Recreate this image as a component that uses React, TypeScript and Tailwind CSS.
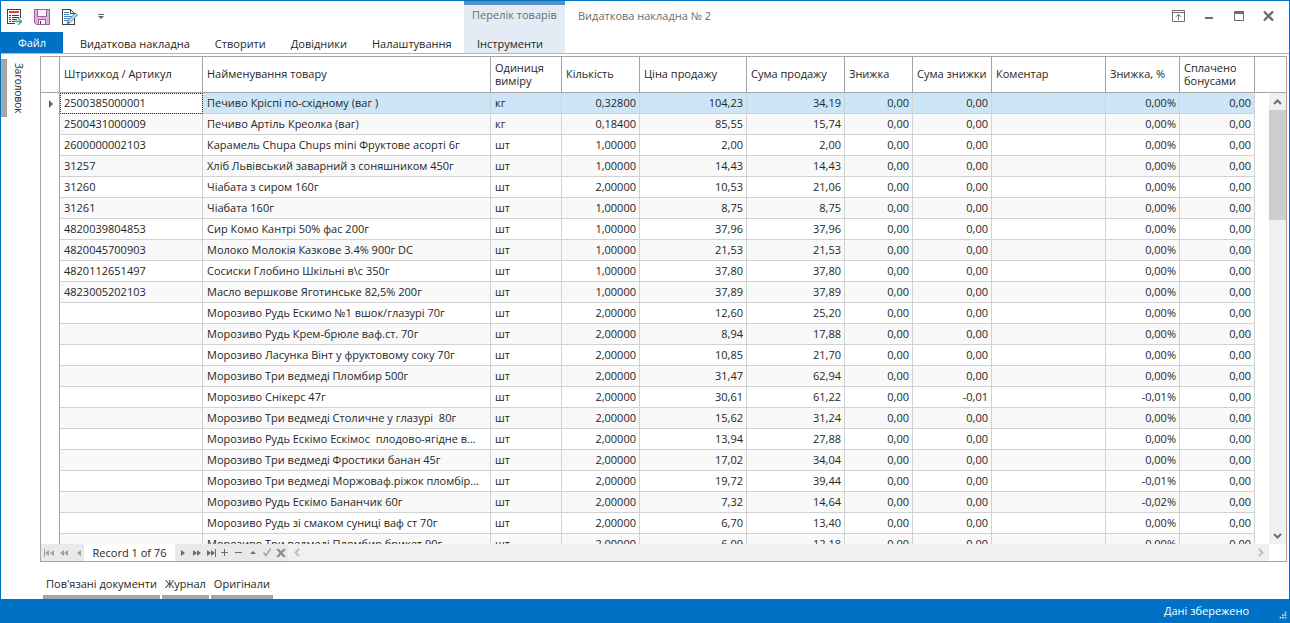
import type { ReactNode } from 'react';
import clsx from 'clsx';

type Row = {
    code: string;
    name: string;
    unit: string;
    qty: string;
    price: string;
    sum: string;
    discountSum?: string;
    discountPct?: string;
};

const rows: Row[] = [
    { code: '2500385000001', name: 'Печиво Кріспі по-східному (ваг )', unit: 'кг', qty: '0,32800', price: '104,23', sum: '34,19' },
    { code: '2500431000009', name: 'Печиво Артіль Креолка (ваг)', unit: 'кг', qty: '0,18400', price: '85,55', sum: '15,74' },
    { code: '2600000002103', name: 'Карамель Chupa Chups mini Фруктове асорті 6г', unit: 'шт', qty: '1,00000', price: '2,00', sum: '2,00' },
    { code: '31257', name: 'Хліб Львівський заварний з соняшником 450г', unit: 'шт', qty: '1,00000', price: '14,43', sum: '14,43' },
    { code: '31260', name: 'Чіабата з сиром 160г', unit: 'шт', qty: '2,00000', price: '10,53', sum: '21,06' },
    { code: '31261', name: 'Чіабата 160г', unit: 'шт', qty: '1,00000', price: '8,75', sum: '8,75' },
    { code: '4820039804853', name: 'Сир Комо Кантрі 50% фас 200г', unit: 'шт', qty: '1,00000', price: '37,96', sum: '37,96' },
    { code: '4820045700903', name: 'Молоко Молокія Казкове 3.4% 900г DC', unit: 'шт', qty: '1,00000', price: '21,53', sum: '21,53' },
    { code: '4820112651497', name: 'Сосиски Глобино Шкільні в\\с 350г', unit: 'шт', qty: '1,00000', price: '37,80', sum: '37,80' },
    { code: '4823005202103', name: 'Масло вершкове Яготинське 82,5% 200г', unit: 'шт', qty: '1,00000', price: '37,89', sum: '37,89' },
    { code: '', name: 'Морозиво Рудь Ескимо №1 вшок/глазурі 70г', unit: 'шт', qty: '2,00000', price: '12,60', sum: '25,20' },
    { code: '', name: 'Морозиво Рудь Крем-брюле ваф.ст. 70г', unit: 'шт', qty: '2,00000', price: '8,94', sum: '17,88' },
    { code: '', name: 'Морозиво Ласунка Вінт у фруктовому соку 70г', unit: 'шт', qty: '2,00000', price: '10,85', sum: '21,70' },
    { code: '', name: 'Морозиво Три ведмеді Пломбир 500г', unit: 'шт', qty: '2,00000', price: '31,47', sum: '62,94' },
    { code: '', name: 'Морозиво Снікерс 47г', unit: 'шт', qty: '2,00000', price: '30,61', sum: '61,22', discountSum: '-0,01', discountPct: '-0,01%' },
    { code: '', name: 'Морозиво Три ведмеді Столичне у глазурі  80г', unit: 'шт', qty: '2,00000', price: '15,62', sum: '31,24' },
    { code: '', name: 'Морозиво Рудь Ескімо Ескімос  плодово-ягідне в...', unit: 'шт', qty: '2,00000', price: '13,94', sum: '27,88' },
    { code: '', name: 'Морозиво Три ведмеді Фростики банан 45г', unit: 'шт', qty: '2,00000', price: '17,02', sum: '34,04' },
    { code: '', name: 'Морозиво Три ведмеді Моржоваф.ріжок пломбір...', unit: 'шт', qty: '2,00000', price: '19,72', sum: '39,44', discountPct: '-0,01%' },
    { code: '', name: 'Морозиво Рудь Ескімо Бананчик 60г', unit: 'шт', qty: '2,00000', price: '7,32', sum: '14,64', discountPct: '-0,02%' },
    { code: '', name: 'Морозиво Рудь зі смаком суниці ваф ст 70г', unit: 'шт', qty: '2,00000', price: '6,70', sum: '13,40' },
    { code: '', name: 'Морозиво Три ведмеді Пломбир брикет 90г', unit: 'шт', qty: '2,00000', price: '6,09', sum: '12,18' },
];

const columns = [
    { title: 'Штрихкод / Артикул', width: 'w-[143px]' },
    { title: 'Найменування товару', width: '' },
    { title: 'Одиниця виміру', width: 'w-[71px]' },
    { title: 'Кількість', width: 'w-[78px]' },
    { title: 'Ціна продажу', width: 'w-[107px]' },
    { title: 'Сума продажу', width: 'w-[98px]' },
    { title: 'Знижка', width: 'w-[68px]' },
    { title: 'Сума знижки', width: 'w-[79px]' },
    { title: 'Коментар', width: 'w-[114px]' },
    { title: 'Знижка, %', width: 'w-[74px]' },
    { title: 'Сплачено бонусами', width: 'w-[75px]' },
];

const ribbonTabs = ['Видаткова накладна', 'Створити', 'Довідники', 'Налаштування'];

function QuickAccess() {
    return (
        <div className="flex h-8 items-center pl-1.5">
            <button aria-label="Перейти до документа" className="mr-3">
                <svg width="15" height="16" viewBox="0 0 15 16" shapeRendering="crispEdges">
                    <path d="M8 14.5H.5V.5h13V9" fill="none" stroke="#404040" />
                    <path d="M2 2h10v2H2z" fill="#e8433a" />
                    <path d="M2 6h2v1H2zM5 6h7v1H5zM2 8h2v1H2zM5 8h7v1H5zM2 10h2v1H2zM5 10h5v1H5zM2 12h2v1H2zM5 12h2v1H5z" fill="#404040" />
                    <path d="M7 12.5h8M11 9l3.500 3.500L11 16" fill="none" stroke="#4aa37c" shapeRendering="auto" strokeWidth="1.3" />
                </svg>
            </button>
            <button aria-label="Зберегти" className="mr-3">
                <svg width="16" height="16" viewBox="0 0 16 16" shapeRendering="crispEdges">
                    <path d="M.5.5h15v15h-13l-2-2z" fill="#dcb4dc" stroke="#a35ca5" />
                    <path d="M3.500.5h9v7h-9z" fill="#fbf5fb" stroke="#a35ca5" />
                    <path d="M4.500 10.500h7v5h-7z" fill="#fff" stroke="#a35ca5" />
                    <path d="M6 12h1v3H6z" fill="#404040" />
                </svg>
            </button>
            <button aria-label="Редагувати" className="mr-5">
                <svg width="16" height="16" viewBox="0 0 16 16">
                    <path d="M.5.5h8l4 4v11H.5z" fill="#fff" stroke="#404040" shapeRendering="crispEdges" />
                    <path d="M8.500.5v4h4" fill="none" stroke="#404040" />
                    <path d="M2 3.500h5M2 5.500h5M2 7.500h8M2 9.500h6M2 11.500h4" stroke="#4b86b4" shapeRendering="crispEdges" />
                    <path d="M5.500 14.500l1-3.500 7-7 2 2-7 7z" fill="#b9dcf3" stroke="#3f87bd" />
                    <path d="M4.500 15.500l1.500-3.500 2 2z" fill="#3f87bd" />
                </svg>
            </button>
            <button aria-label="Налаштувати панель">
                <svg width="6" height="6" viewBox="0 0 6 6" fill="#666">
                    <path d="M0 0h6v1H0zM0 2h6L3 5z" />
                </svg>
            </button>
        </div>
    );
}

function WindowControls() {
    return (
        <div className="flex gap-4 pr-[13px] text-[#6d6d6d]">
            <button aria-label="Сховати стрічку">
                <svg width="14" height="14" viewBox="0 0 14 14" fill="none" stroke="currentColor">
                    <path d="M.5 1.500h12v11H.5zM1 3.500h11M6.500 11V5.500M4 7.800l2.500-2.500L9 7.800" />
                </svg>
            </button>
            <button aria-label="Згорнути">
                <svg width="14" height="14" viewBox="0 0 14 14" fill="currentColor">
                    <path d="M3 8h8v2H3z" />
                </svg>
            </button>
            <button aria-label="Розгорнути">
                <svg width="14" height="14" viewBox="0 0 14 14" fill="currentColor">
                    <path fillRule="evenodd" d="M2 2h10v10H2zM3 5v6h8V5z" />
                </svg>
            </button>
            <button aria-label="Закрити">
                <svg width="14" height="14" viewBox="0 0 14 14" fill="none" stroke="currentColor" strokeWidth="2.400">
                    <path d="M2 2.500l9 9M11 2.500l-9 9" />
                </svg>
            </button>
        </div>
    );
}

function Ribbon() {
    return (
        <header className="flex h-[53px] shrink-0 border-b border-[#b4b4b4]">
            <div className="flex w-[463px] shrink-0 flex-col">
                <QuickAccess />
                <nav className="flex h-5 items-stretch gap-px">
                    <button className="mr-1 -mt-px w-[62px] bg-[#0072c6] text-white">Файл</button>
                    {ribbonTabs.map((tab) => (
                        <button key={tab} className="px-3 whitespace-nowrap">{tab}</button>
                    ))}
                </nav>
            </div>
            <div className="flex w-[101px] shrink-0 flex-col border-t-4 border-[#5b8fbf] bg-[#e3ecf5]">
                <span className="pt-0.5 text-center whitespace-nowrap text-[#6d6d6d]">Перелік товарів</span>
                <button className="mt-auto px-[13px] pb-0.5 text-left">Інструменти</button>
            </div>
            <div className="flex h-[30px] flex-1 items-center justify-between pl-[13px]">
                <h1 className="pb-0.5 text-[#6d6d6d]">Видаткова накладна № 2</h1>
                <WindowControls />
            </div>
        </header>
    );
}

function Cell({ children, right, className }: { children?: ReactNode; right?: boolean; className?: string }) {
    return (
        <td
            className={clsx(
                'overflow-hidden border-r border-b border-[#d2d2d2] p-0 pb-0.5 whitespace-pre',
                right ? 'pr-[3px] text-right' : 'pl-1',
                className
            )}
        >
            {children}
        </td>
    );
}

function ItemsTable() {
    return (
        <table className="w-full min-w-0 table-fixed border-separate border-spacing-0">
            <colgroup>
                <col className="w-[19px]" />
                {columns.map((c) => (
                    <col key={c.title} className={c.width} />
                ))}
                <col className="w-[14px]" />
            </colgroup>
            <thead>
                <tr className="h-9">
                    <th className="border-r border-b border-[#a5a5a5] p-0" />
                    {columns.map((c) => (
                        <th key={c.title} className="border-r border-b border-[#a5a5a5] p-0 pb-0.5 pl-1 text-left leading-[13px] font-normal">
                            {c.title}
                        </th>
                    ))}
                    <th className="border-b border-[#a5a5a5] p-0" />
                </tr>
            </thead>
            <tbody>
                {rows.map((r, i) => (
                    <tr key={i} className={clsx('h-[21px]', i === 0 ? 'bg-[#cde6f7]' : i % 2 === 1 && 'bg-[#f9f9f9]')}>
                        <td className="border-r border-[#a5a5a5] bg-white p-0">
                            {i === 0 && (
                                <svg className="ml-2" width="4" height="8" viewBox="0 0 4 8" fill="#666">
                                    <path d="M0 0l4 4-4 4z" />
                                </svg>
                            )}
                        </td>
                        <Cell className={i === 0 ? 'bg-white outline-1 -outline-offset-1 outline-dotted outline-[#333]' : ''}>{r.code}</Cell>
                        <Cell>{r.name}</Cell>
                        <Cell>{r.unit}</Cell>
                        <Cell right>{r.qty}</Cell>
                        <Cell right>{r.price}</Cell>
                        <Cell right>{r.sum}</Cell>
                        <Cell right>0,00</Cell>
                        <Cell right>{r.discountSum ?? '0,00'}</Cell>
                        <Cell />
                        <Cell right>{r.discountPct ?? '0,00%'}</Cell>
                        <Cell right>0,00</Cell>
                        <td className="bg-white p-0" />
                    </tr>
                ))}
            </tbody>
        </table>
    );
}

function Scrollbar() {
    return (
        <div className="flex w-[17px] shrink-0 flex-col">
            <div className="h-9 shrink-0 border-b border-[#a5a5a5]" />
            <div className="flex flex-1 flex-col bg-[#f0f0f0]">
                <button aria-label="Вгору" className="flex h-[17px] items-center justify-center">
                    <svg width="9" height="6" viewBox="0 0 9 6" fill="none" stroke="#6d6d6d" strokeWidth="2">
                        <path d="M1 5l3.500-3.500L8 5" />
                    </svg>
                </button>
                <div className="h-[110px] bg-[#cdcdcd]" />
                <button aria-label="Вниз" className="mt-auto flex h-[17px] items-center justify-center">
                    <svg width="9" height="6" viewBox="0 0 9 6" fill="none" stroke="#6d6d6d" strokeWidth="2">
                        <path d="M1 1l3.500 3.500L8 1" />
                    </svg>
                </button>
            </div>
        </div>
    );
}

function NavButton({ label, color = '#6d6d6d', children }: { label: string; color?: string; children: ReactNode }) {
    return (
        <button aria-label={label} className="flex h-full w-[14px] items-center justify-center">
            <svg width="12" height="10" viewBox="0 0 12 10" fill={color} stroke="none">
                {children}
            </svg>
        </button>
    );
}

function Navigator() {
    return (
        <div className="flex h-[17px] shrink-0 items-center bg-[#f0f0f0]">
            <div className="flex h-full bg-[#e9e9e9] pl-px">
                <NavButton label="Перший" color="#a0a0a0">
                    <path d="M1 1h1v8H1zM6 2v6L2 5zM11 2v6L7 5z" />
                </NavButton>
                <NavButton label="Попередня сторінка" color="#a0a0a0">
                    <path d="M7 2v6L3 5zM11 2v6L7 5z" />
                </NavButton>
                <NavButton label="Попередній" color="#a0a0a0">
                    <path d="M10 2v6L6 5z" />
                </NavButton>
            </div>
            <span className="h-full w-[91px] bg-white text-center leading-[17px] whitespace-nowrap">Record 1 of 76</span>
            <div className="flex h-full bg-[#e9e9e9] pl-px">
                <NavButton label="Наступний">
                    <path d="M4 2v6l4-3z" />
                </NavButton>
                <NavButton label="Наступна сторінка">
                    <path d="M2 2v6l4-3zM6 2v6l4-3z" />
                </NavButton>
                <NavButton label="Останній">
                    <path d="M2 2v6l4-3zM6 2v6l4-3zM10 1h1v8h-1z" />
                </NavButton>
                <NavButton label="Додати">
                    <path d="M2 4h7v1H2zM5 1h1v7H5z" />
                </NavButton>
                <NavButton label="Видалити">
                    <path d="M2 4h7v1H2z" />
                </NavButton>
                <NavButton label="Редагувати запис">
                    <path d="M3 6l3-3 3 3z" />
                </NavButton>
                <NavButton label="Підтвердити" color="#a0a0a0">
                    <path d="M2 5l1-1 2 2 4-6 1 1-5 8z" />
                </NavButton>
                <NavButton label="Скасувати" color="#8c8c8c">
                    <path d="M1 1h3l2 2.500L8 1h3L7.500 5 11 9H8L6 6.500 4 9H1l3.500-4z" />
                </NavButton>
            </div>
            <button aria-label="Ліворуч" className="flex w-[17px] justify-center">
                <svg width="6" height="9" viewBox="0 0 6 9" fill="none" stroke="#bfbfbf" strokeWidth="2">
                    <path d="M5 1L1.500 4.500 5 8" />
                </svg>
            </button>
            <button aria-label="Праворуч" className="ml-auto flex w-[17px] justify-center">
                <svg width="6" height="9" viewBox="0 0 6 9" fill="none" stroke="#bfbfbf" strokeWidth="2">
                    <path d="M1 1l3.500 3.500L1 8" />
                </svg>
            </button>
            <div className="h-full w-[17px] bg-white" />
        </div>
    );
}

export default function App() {
    return (
        <div className="flex h-screen flex-col overflow-hidden bg-white font-['Open_Sans','Noto_Sans',sans-serif] text-[11px] leading-[15px] text-[#262626]">
            <div className="flex min-h-0 flex-1 flex-col border-x border-t border-[#0072c6]">
                <Ribbon />
                <main className="flex min-h-0 flex-1 pt-0.5 pr-0.5">
                    <button className="mt-[3px] flex h-[58px] w-[39px] shrink-0 items-start border-l-[6px] border-[#a5a5a5]">
                        <span className="ml-1 pt-1 text-[10px] whitespace-nowrap [writing-mode:vertical-rl]">Заголовок</span>
                    </button>
                    <div className="flex min-w-0 flex-1 flex-col">
                        <div className="flex min-h-0 flex-1 flex-col border border-[#a5a5a5]">
                            <div className="flex min-h-0 flex-1 overflow-hidden">
                                <div className="min-w-0 flex-1 overflow-hidden">
                                    <ItemsTable />
                                </div>
                                <Scrollbar />
                            </div>
                            <Navigator />
                        </div>
                        <nav className="mt-[14px] flex h-[23px] shrink-0 gap-0.5 pl-[3px]">
                            {['Пов\'язані документи', 'Журнал', 'Оригінали'].map((t) => (
                                <button key={t} className="border-b-4 border-[#a5a5a5] px-[3px] pb-1 whitespace-nowrap">{t}</button>
                            ))}
                        </nav>
                    </div>
                </main>
            </div>
            <footer className="flex h-6 shrink-0 items-center justify-end bg-[#0072c6] text-white">
                <span className="pb-0.5">Дані збережено</span>
                <svg className="ml-[29px] mr-0.5 self-end pb-0.5" width="10" height="12" viewBox="0 0 10 12" fill="#c5d9ea">
                    <path d="M7 1h2v2H7zM4 4h2v2H4zM7 4h2v2H7zM1 7h2v2H1zM4 7h2v2H4zM7 7h2v2H7z" />
                </svg>
            </footer>
        </div>
    );
}
